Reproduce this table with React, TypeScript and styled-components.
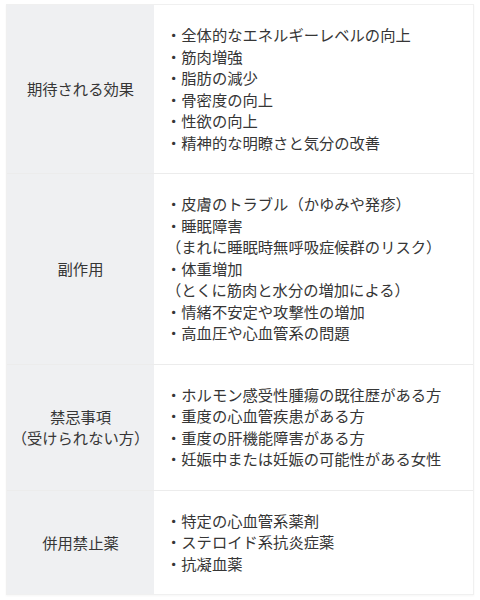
import styled, { createGlobalStyle } from "styled-components";

const GlobalStyle = createGlobalStyle`
  * {
    box-sizing: border-box;
  }
  body {
    margin: 0;
    background: #ffffff;
    font-family: "Noto Sans CJK JP", "Noto Sans", sans-serif;
    color: #333333;
  }
`;

const Table = styled.div`
  margin: 4px 6px 5px 6px;
  border: 1px solid #f0f0f0;
  box-shadow: 0 1px 2px rgba(0, 0, 0, 0.04);
  display: flex;
  flex-direction: column;
`;

const Row = styled.div`
  display: grid;
  grid-template-columns: 147px 1fr;
  border-top: 1px solid #ececec;

  &:first-child {
    border-top: none;
  }
`;

const Label = styled.div`
  background: #eff0f2;
  display: flex;
  align-items: center;
  justify-content: center;
  text-align: center;
  font-size: 15.3px;
  line-height: 21.5px;
  color: #363636;
  padding: 8px 4px;
  white-space: pre-line;
`;

const Items = styled.ul`
  list-style: none;
  margin: 0;
  padding: 19px 10px 20px 12px;
  font-size: 15.3px;
  line-height: 21.5px;
  color: #363636;
`;

const Item = styled.li`
  white-space: nowrap;
`;

interface Section {
  label: string;
  items: string[];
}

const sections: Section[] = [
  {
    label: "期待される効果",
    items: [
      "・全体的なエネルギーレベルの向上",
      "・筋肉増強",
      "・脂肪の減少",
      "・骨密度の向上",
      "・性欲の向上",
      "・精神的な明瞭さと気分の改善",
    ],
  },
  {
    label: "副作用",
    items: [
      "・皮膚のトラブル（かゆみや発疹）",
      "・睡眠障害",
      "（まれに睡眠時無呼吸症候群のリスク）",
      "・体重増加",
      "（とくに筋肉と水分の増加による）",
      "・情緒不安定や攻撃性の増加",
      "・高血圧や心血管系の問題",
    ],
  },
  {
    label: "禁忌事項\n（受けられない方）",
    items: [
      "・ホルモン感受性腫瘍の既往歴がある方",
      "・重度の心血管疾患がある方",
      "・重度の肝機能障害がある方",
      "・妊娠中または妊娠の可能性がある女性",
    ],
  },
  {
    label: "併用禁止薬",
    items: ["・特定の心血管系薬剤", "・ステロイド系抗炎症薬", "・抗凝血薬"],
  },
];

export default function App() {
  return (
    <>
      <GlobalStyle />
      <Table>
        {sections.map((section) => (
          <Row key={section.label}>
            <Label>{section.label}</Label>
            <Items>
              {section.items.map((item) => (
                <Item key={item}>{item}</Item>
              ))}
            </Items>
          </Row>
        ))}
      </Table>
    </>
  );
}
